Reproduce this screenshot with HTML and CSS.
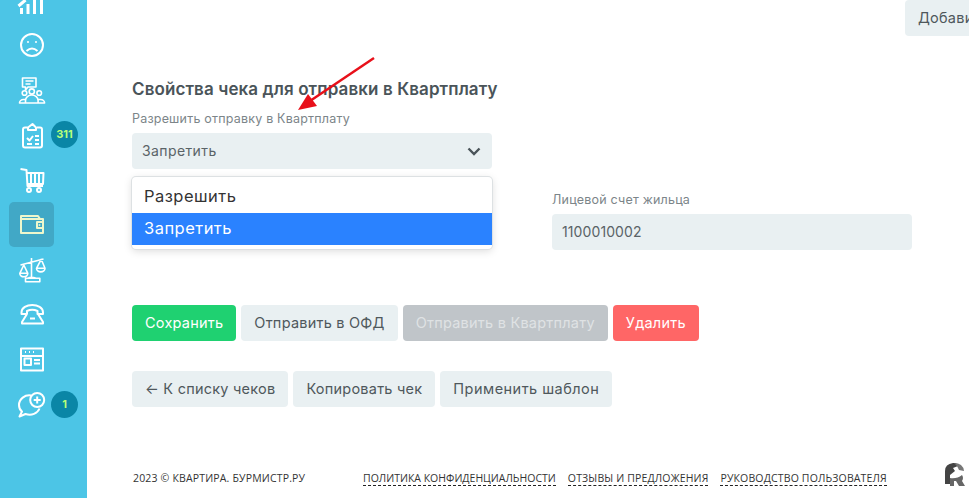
FILE: index.html
```html
<!DOCTYPE html>
<html lang="ru">
<head>
<meta charset="utf-8">
<title>Свойства чека</title>
<link rel="stylesheet" href="styles.css">
</head>
<body>
<nav class="sidebar">
  <a class="nav-item"><svg class="icon bars" viewBox="0 0 30 30"><path d="M4.500 29v-6M11 29v-10M17.500 29v-14M24.500 29v-16M1.500 21l7-6"/></svg></a>
  <a class="nav-item"><svg class="icon" viewBox="0 0 30 30"><circle cx="15" cy="15" r="11"/><path d="M9.500 21q5.500-5 11 0"/><circle class="dot" cx="11" cy="12" r="1"/><circle class="dot" cx="19" cy="12" r="1"/></svg></a>
  <a class="nav-item"><svg class="icon thin" viewBox="0 0 30 30"><path d="M5.500 3h13.500v9h-8l-2.500 3v-3h-3zM8.500 6h8M8.500 9h5"/><circle cx="7.500" cy="18" r="2.300"/><circle cx="14.800" cy="16.500" r="2.600"/><circle cx="22.200" cy="18" r="2.300"/><path d="M8.500 28v-2.500a6.300 5.500 0 0 1 12.600 0v2.500zM8.500 24.500h-2a4 3.500 0 0 0-4 3.500h6M21.100 24.500h2.500a4 3.500 0 0 1 4 3.500h-6.500"/></svg></a>
  <a class="nav-item"><svg class="icon" viewBox="0 0 30 30"><path d="M11 7.500h-3a2 2 0 0 0-2 2v16a2 2 0 0 0 2 2h15a2 2 0 0 0 2-2v-16a2 2 0 0 0-2-2h-3M11 7.500l4.500-3.500 3.500 3.500v2.500h-8zM10 18l2.500 2.500 3.500-4.500M18 16h4M18 20h4M18 24h4M10 24h5"/></svg><span class="badge">311</span></a>
  <a class="nav-item"><svg class="icon" viewBox="0 0 30 30"><path d="M3.500 4l6 1 1 16h15.500M9.500 8h17l-.5 11h-16M14 8v11M18 8v11M22 8v11"/><circle cx="12" cy="25" r="2"/><circle cx="22" cy="25" r="2"/></svg></a>
  <a class="nav-item active"><svg class="icon" viewBox="0 0 30 30"><path d="M4 9v14h22v-5M26 12v-3h-22v-3h17l2 3M20 12h6v6h-6z"/><circle class="dot" cx="22.500" cy="15" r="1"/></svg></a>
  <a class="nav-item"><svg class="icon thin" viewBox="0 0 30 30"><path d="M14.500 3v20M3.500 10l23-6M6.800 10l-4 8.300h8zM24.200 4.300l-4.700 9h8.500zM2.800 18.300a4 3.500 0 0 0 8 0M19.500 13.300a4.200 3.500 0 0 0 8.500 0M8.500 23.300h14.300v3.400h-14.300zM11 23.300q3.500-2 8 0"/></svg></a>
  <a class="nav-item"><svg class="icon" viewBox="0 0 30 30"><path d="M4.500 12.500c0-10 21.500-10 21.500 0v1.500h-5.500v-3c-3-1.500-7.500-1.500-10.500 0v3h-5.500zM10 14l-5 8v1.500h21v-1.500l-5-8M13 18.500h5"/></svg></a>
  <a class="nav-item"><svg class="icon" viewBox="0 0 30 30"><path d="M4 3.500h22v22h-22zM4 11h22M8 7h1M12 7h1M16 7h1M7.500 13.500h6.500v6.500h-6.500zM17 15h6M17 18.500h6"/></svg></a>
  <a class="nav-item"><svg class="icon" viewBox="0 0 30 30"><path d="M14 5.500c-6-1-12 3.500-12 9.500 0 3 1 5 3 6.500l-2.500 5 6-2.500c6 2 12-.5 14-5.500"/><circle cx="20.200" cy="10" r="7"/><path d="M20.200 6.500v7M16.700 10h7"/></svg><span class="badge">1</span></a>
</nav>

<main class="content">
  <div class="topbar"><button class="btn">Добавить чек</button></div>

  <h2 class="title">Свойства чека для отправки в Квартплату</h2>

  <div class="form-grid">
    <div class="field field-permit">
      <label class="label">Разрешить отправку в Квартплату</label>
      <div class="select">
        <span>Запретить</span>
        <svg class="chevron" viewBox="0 0 14 9"><path d="M1.500 1.500l5.500 5.500 5.500-5.500"/></svg>
      </div>
      <ul class="dropdown">
        <li class="option">Разрешить</li>
        <li class="option selected">Запретить</li>
      </ul>
    </div>
    <div class="field field-account">
      <label class="label">Лицевой счет жильца</label>
      <div class="input">1100010002</div>
    </div>
  </div>

  <div class="actions">
    <button class="btn btn-green">Сохранить</button>
    <button class="btn">Отправить в ОФД</button>
    <button class="btn btn-disabled">Отправить в Квартплату</button>
    <button class="btn btn-red">Удалить</button>
  </div>

  <div class="actions actions-second">
    <button class="btn">← К списку чеков</button>
    <button class="btn">Копировать чек</button>
    <button class="btn btn-wide">Применить шаблон</button>
  </div>

  <footer class="footer">
    <span class="copyright">2023 © КВАРТИРА. БУРМИСТР.РУ</span>
    <div class="footer-links">
      <a class="footer-link">ПОЛИТИКА КОНФИДЕНЦИАЛЬНОСТИ</a>
      <a class="footer-link footer-link-wide">ОТЗЫВЫ И ПРЕДЛОЖЕНИЯ</a>
      <a class="footer-link footer-link-wide">РУКОВОДСТВО ПОЛЬЗОВАТЕЛЯ</a>
    </div>
    <svg class="logo" viewBox="0 0 22 24"><path d="M1 22V9q0-7 8-8l3 0 2 3-5 2 2 3-5 4v9z" fill="#444"/><path d="M10 1q9 0 10 8l-5-1-2-4z" fill="#777"/><path d="M6 16q7 1 12-3 2 3 0 6l3 5h-6l-3-5h-2v5H6z" fill="#666"/></svg>
  </footer>
</main>

<svg class="annotation" viewBox="0 0 90 60"><path class="arrow-line" d="M84 6L20 49"/><path class="arrow-head" d="M8 58l10-16 9 12z"/></svg>
</body>
</html>
```
FILE: styles.css
```css
* { box-sizing: border-box; }
html, body { margin: 0; height: 498px; overflow: hidden; }
body {
  display: flex;
  position: relative;
  background: #fff;
  font-family: "Inter", "Noto Sans", sans-serif;
  color: #4a5459;
}
.sidebar {
  flex: 0 0 87px;
  height: 498px;
  background: #4cc5e6;
  display: flex;
  flex-direction: column;
  overflow: hidden;
}
.nav-item {
  position: relative;
  flex: 0 0 45px;
  width: 45px;
  height: 45px;
  margin-left: 9px;
  display: flex;
  align-items: center;
  justify-content: center;
  border-radius: 5px;
}
.nav-item:first-child { margin-top: -23px; }
.active { background: #41a8c6; }
.icon {
  width: 30px;
  height: 30px;
  flex: none;
  fill: none;
  stroke: #fff;
  stroke-width: 2;
  stroke-linejoin: round;
}
.icon.thin { stroke-width: 1.600; }
.icon.bars { stroke-width: 3; }
.active .icon { stroke: #eef7cc; }
.icon .dot { fill: #fff; stroke: none; }
.active .icon .dot { fill: #eef7cc; }
.badge {
  position: absolute;
  left: 42px;
  top: 9px;
  width: 27px;
  height: 27px;
  border-radius: 50%;
  background: #0a86a6;
  color: #b6ff7a;
  font-size: 11px;
  font-weight: 700;
  line-height: 27px;
  text-align: center;
}
.content {
  flex: 1;
  min-width: 0;
  padding: 0 57px 0 45px;
  display: flex;
  flex-direction: column;
}
.topbar {
  display: flex;
  margin-left: 773px;
  height: 36px;
}
.title {
  margin: 42px 0 0;
  font-size: 17px;
  line-height: 22px;
  font-weight: 600;
  letter-spacing: .1px;
  color: #4a5459;
}
.form-grid {
  display: grid;
  grid-template-columns: 360px 360px;
  column-gap: 60px;
  margin-top: 11px;
}
.field { position: relative; }
.field-permit { grid-column: 1; height: 62px; }
.field-account { grid-column: 2; grid-row: 2; margin-top: 19px; }
.label {
  display: block;
  font-size: 12.500px;
  line-height: 16px;
  color: #7c8589;
  margin-bottom: 6px;
  letter-spacing: .2px;
}
.select, .input {
  height: 36px;
  background: #e9f0f2;
  border-radius: 4px;
  padding: 0 10px 2px;
  display: flex;
  align-items: center;
  justify-content: space-between;
  font-size: 14px;
  letter-spacing: .1px;
  color: #5a6367;
}
.select { letter-spacing: .4px; }
.chevron {
  width: 14px;
  height: 9px;
  margin: 2px 1px 0 0;
  fill: none;
  stroke: #4a5459;
  stroke-width: 2.400;
}
.dropdown {
  position: absolute;
  z-index: 2;
  top: 66px;
  left: 0;
  width: 360px;
  height: 72px;
  margin: 0;
  padding: 4px 0 0;
  list-style: none;
  background: #fff;
  border-radius: 4px;
  box-shadow: 0 0 0 1px #dde1e3, 0 2px 8px rgba(0, 0, 0, .15);
}
.option {
  height: 32px;
  padding: 0 12px;
  font-size: 16.500px;
  line-height: 30px;
  letter-spacing: .47px;
  color: #333;
}
.selected { background: #2a82ff; color: #fff; }
.actions {
  display: flex;
  gap: 5px;
  margin-top: 55px;
}
.actions-second { margin-top: 30px; }
.btn {
  height: 36px;
  padding: 0 13px 2px;
  border: 0;
  border-radius: 4px;
  background: #e9f0f2;
  color: #4f585c;
  font-family: inherit;
  font-size: 14.500px;
  font-weight: 400;
  letter-spacing: .23px;
  white-space: nowrap;
  flex: none;
}
.btn-wide { letter-spacing: .47px; }
.btn-green { background: #1fd171; color: #fff; }
.btn-disabled { background: #c0c5c9; color: #dfe2e4; }
.btn-red { background: #ff6666; color: #fff; }
.footer {
  display: flex;
  align-items: flex-start;
  margin-top: 65px;
  font-family: "Open Sans", sans-serif;
  font-size: 10.500px;
  line-height: 13px;
  color: #333;
  width: 840px;
  position: relative;
}
.copyright { width: 231px; padding-left: 1px; letter-spacing: .17px; }
.footer-links { display: flex; gap: 12px; }
.footer-link { border-bottom: 1px dashed #222; }
.footer-link-wide { letter-spacing: .15px; }
.logo { position: absolute; left: 812px; top: -10px; width: 22px; height: 24px; }
.annotation { position: absolute; left: 290px; top: 52px; width: 90px; height: 60px; }
.arrow-line { stroke: #e8101a; stroke-width: 2.500; fill: none; }
.arrow-head { fill: #e8101a; }
```
